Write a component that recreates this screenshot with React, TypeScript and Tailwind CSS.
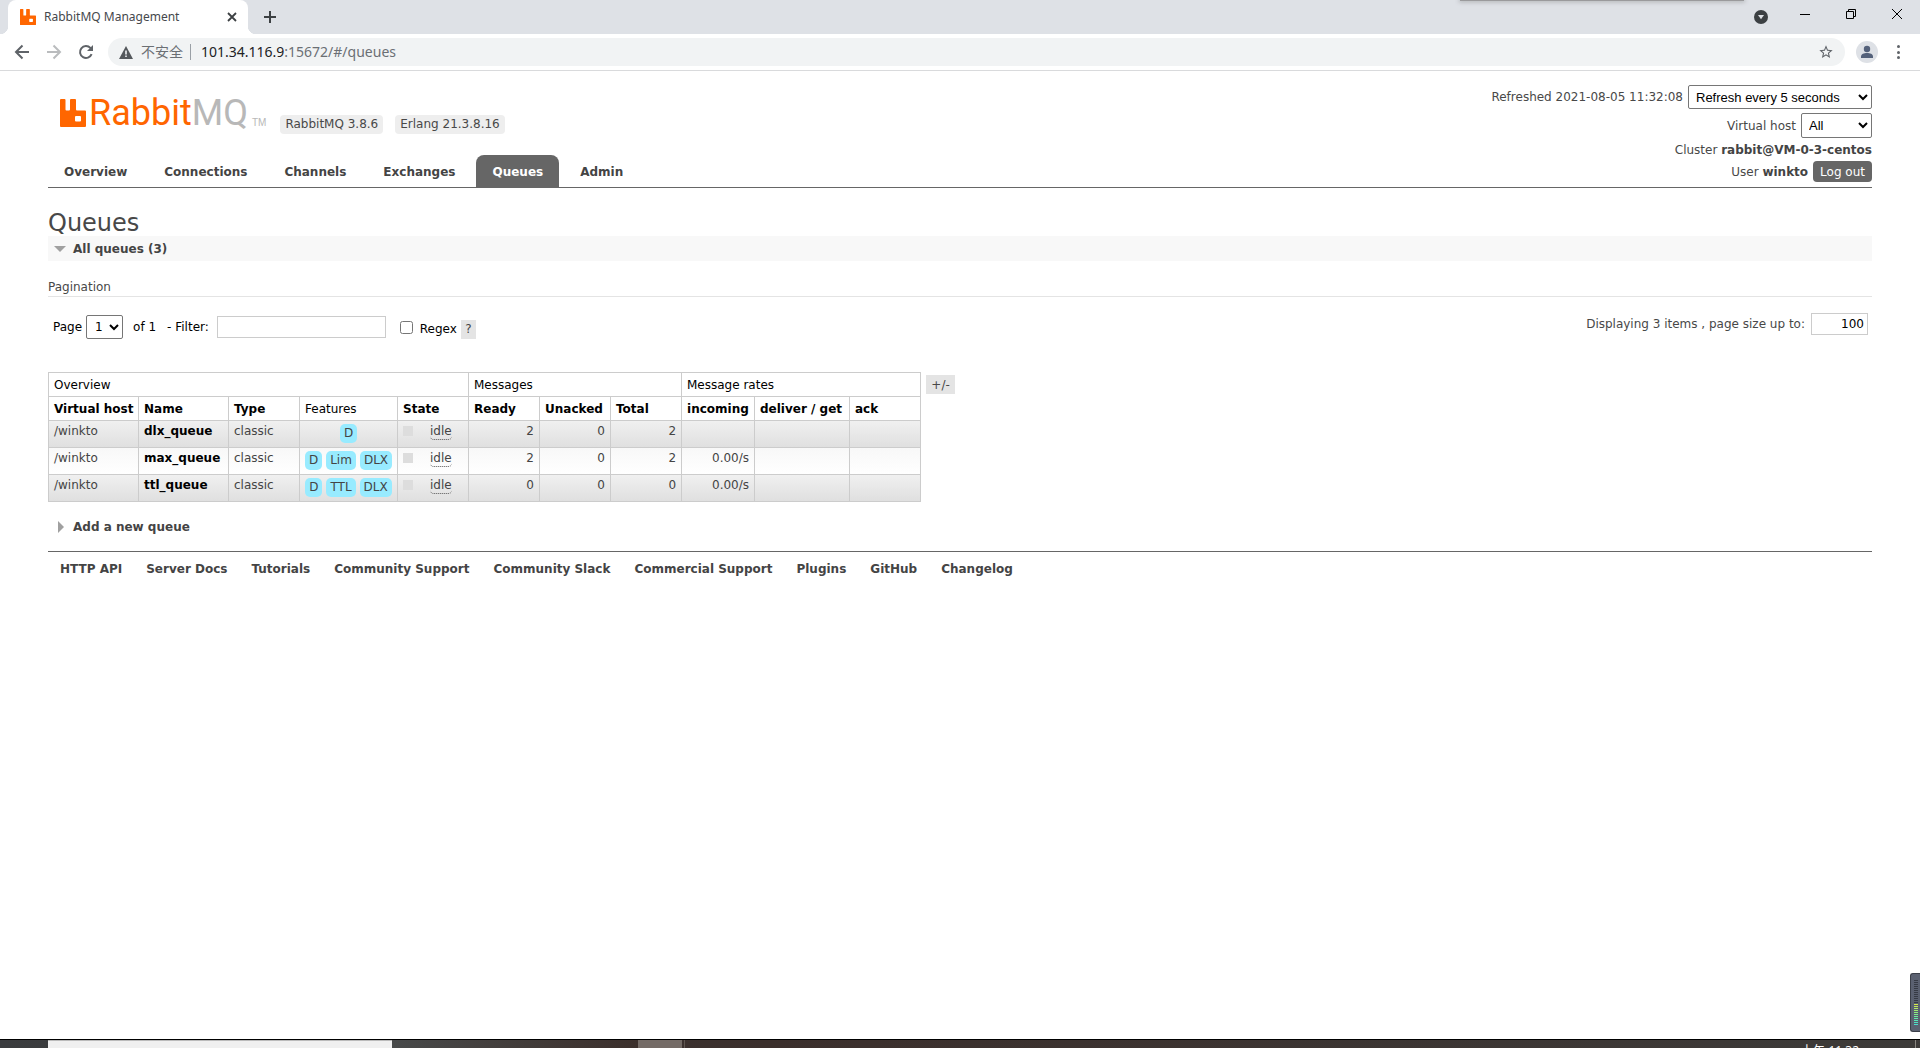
import React from "react";

const tabs = ["Overview", "Connections", "Channels", "Exchanges", "Queues", "Admin"];

const footerLinks = [
  "HTTP API",
  "Server Docs",
  "Tutorials",
  "Community Support",
  "Community Slack",
  "Commercial Support",
  "Plugins",
  "GitHub",
  "Changelog",
];

const columns = [
  { label: "Virtual host", width: "w-[90px]" },
  { label: "Name", width: "w-[90px]" },
  { label: "Type", width: "w-[71px]" },
  { label: "Features", width: "w-[98px]", plain: true },
  { label: "State", width: "w-[71px]" },
  { label: "Ready", width: "w-[71px]" },
  { label: "Unacked", width: "w-[71px]" },
  { label: "Total", width: "w-[71px]" },
  { label: "incoming", width: "w-[73px]" },
  { label: "deliver / get", width: "w-[95px]" },
  { label: "ack", width: "w-[71px]" },
];

const queues = [
  { name: "dlx_queue", features: ["D"], ready: 2, unacked: 0, total: 2, incoming: "" },
  { name: "max_queue", features: ["D", "Lim", "DLX"], ready: 2, unacked: 0, total: 2, incoming: "0.00/s" },
  { name: "ttl_queue", features: ["D", "TTL", "DLX"], ready: 0, unacked: 0, total: 0, incoming: "0.00/s" },
];

const meterColors = [
  "#d6e84a", "#c3ea57", "#b0ec64", "#9eed70", "#8dee7d", "#7cee8b",
  "#6dec9a", "#61eaa9", "#57e6b6", "#50e1c1", "#4adccb",
];

function RabbitMark({ className }: { className: string }) {
  return (
    <svg viewBox="0 0 26 28" className={className} preserveAspectRatio="none" aria-hidden="true">
      <path
        fill="#ff6600"
        fillRule="evenodd"
        d="M1 0h3.500q1 0 1 1v9.500q0 1 1 1h2.500q1 0 1-1V1q0-1 1-1h4q1 0 1 1v9.500q0 1 1 1h8q1 0 1 1V27q0 1-1 1H1q-1 0-1-1V1q0-1 1-1zM16 17q-1 0-1 1v3.600q0 1 1 1h4q1 0 1-1V18q0-1-1-1z"
      />
    </svg>
  );
}

function BrowserChrome() {
  return (
    <header className="font-['Noto_Sans','Noto_Sans_CJK_SC',sans-serif]">
      <div className="relative flex h-[34px] items-stretch bg-[#dee1e6] pl-2">
        <div className="relative flex w-60 items-center rounded-t-lg bg-white pl-3 pr-2 text-xs text-[#45484c]">
          <span className="absolute -left-2 bottom-0 size-2 bg-[radial-gradient(circle_at_0_0,#dee1e6_8px,#fff_8.5px)]" />
          <span className="absolute -right-2 bottom-0 size-2 bg-[radial-gradient(circle_at_100%_0,#dee1e6_8px,#fff_8.5px)]" />
          <RabbitMark className="h-4 w-4" />
          <span className="ml-2 grow whitespace-nowrap">RabbitMQ Management</span>
          <button aria-label="Close tab" className="flex size-4 items-center justify-center">
            <svg viewBox="0 0 16 16" className="size-4" stroke="#3c4043" strokeWidth="1.8">
              <path d="M4 4l8 8M12 4l-8 8" />
            </svg>
          </button>
        </div>
        <button aria-label="New tab" className="ml-3 flex w-5 items-center justify-center">
          <svg viewBox="0 0 14 14" className="size-3.5" stroke="#3c4043" strokeWidth="2">
            <path d="M7 1v12M1 7h12" />
          </svg>
        </button>
        <div className="absolute right-[176px] top-0 h-px w-[284px] bg-[#9a9a9c] shadow-[0_0_4px_1px_#a8aaad]" />
        <div className="ml-auto flex items-start text-black">
          <button aria-label="Search tabs" className="mr-6 mt-2.5">
            <svg viewBox="0 0 14 14" className="size-3.5">
              <circle cx="7" cy="7" r="7" fill="#3c4043" />
              <path d="M4 5h6L7 9.2z" fill="#dee1e6" />
            </svg>
          </button>
          <button aria-label="Minimize" className="flex h-7 w-[46px] items-center justify-start pl-2">
            <span className="h-px w-2.5 bg-black" />
          </button>
          <button aria-label="Restore" className="flex h-7 w-[46px] items-center justify-start pl-2">
            <svg viewBox="0 0 10 10" className="size-2.5" fill="none" stroke="currentColor">
              <path d="M.5 2.5h7v7h-7zM2.5 2.5v-2h7v7h-2" />
            </svg>
          </button>
          <button aria-label="Close" className="flex h-7 w-9 items-center justify-start pl-2">
            <svg viewBox="0 0 10 10" className="size-2.5" stroke="currentColor">
              <path d="M0 0l10 10M10 0L0 10" />
            </svg>
          </button>
        </div>
      </div>
      <div className="flex h-[37px] items-center border-b border-[#d9dadc] bg-white pl-[14px] pr-4">
        <button aria-label="Back" className="mr-4 size-4">
          <svg viewBox="0 0 16 16" className="size-4" fill="none" stroke="#5f6368" strokeWidth="2">
            <path d="M15 8H2M8.500 1.500L2 8l6.500 6.500" />
          </svg>
        </button>
        <button aria-label="Forward" className="mr-4 size-4">
          <svg viewBox="0 0 16 16" className="size-4" fill="none" stroke="#babcbe" strokeWidth="2">
            <path d="M1 8h13M7.500 1.500L14 8l-6.500 6.500" />
          </svg>
        </button>
        <button aria-label="Reload" className="mr-[14px] size-4">
          <svg viewBox="0 0 16 16" className="size-4" fill="none" stroke="#5f6368" strokeWidth="2">
            <path d="M13.600 10.200A6 6 0 1 1 12.400 3.900L14 5.500" />
            <path d="M15 1v6H9z" fill="#5f6368" stroke="none" />
          </svg>
        </button>
        <div className="flex h-7 grow items-center rounded-full bg-[#f1f3f4] pl-[11px] pr-[11px] text-sm text-[#6b6f74]">
          <svg viewBox="0 0 14 13" className="h-[13px] w-[14px]">
            <path d="M7 0l7 13H0z" fill="#54585c" />
            <path d="M6.200 4.500h1.600v4H6.200zM6.200 9.500h1.600v1.600H6.200z" fill="#f1f3f4" />
          </svg>
          <span className="ml-2">不安全</span>
          <span className="ml-[7px] mr-2.5 h-4 w-px bg-[#9aa0a6]" />
          <span className="whitespace-nowrap">
            <span className="text-[#202124]">101.34.116.9</span>:15672/#/queues
          </span>
          <button aria-label="Bookmark" className="ml-auto size-4">
            <svg viewBox="0 0 24 24" className="size-4" fill="#5f6368">
              <path d="M22 9.240l-7.190-.620L12 2 9.190 8.630 2 9.240l5.460 4.730L5.820 21 12 17.270 18.180 21l-1.630-7.030zM12 15.400l-3.760 2.270 1-4.280-3.320-2.880 4.380-.380L12 6.100l1.710 4.040 4.380.380-3.320 2.880 1 4.280z" />
            </svg>
          </button>
        </div>
        <button aria-label="Profile" className="ml-[11px] size-[22px]">
          <svg viewBox="0 0 22 22" className="size-[22px]">
            <circle cx="11" cy="11" r="11" fill="#dee1e6" />
            <circle cx="11" cy="8" r="3.200" fill="#54617a" />
            <path d="M5 17v-1.500c0-4.600 12-4.600 12 0V17z" fill="#54617a" />
          </svg>
        </button>
        <button aria-label="Menu" className="ml-[14px] flex h-4 w-3 flex-col items-center justify-between py-px">
          <span className="size-[3px] rounded-full bg-[#5f6368]" />
          <span className="size-[3px] rounded-full bg-[#5f6368]" />
          <span className="size-[3px] rounded-full bg-[#5f6368]" />
        </button>
      </div>
    </header>
  );
}

function PageHeader() {
  return (
    <header className="flex h-[117px] items-stretch justify-between border-b border-[#666]">
      <div className="flex flex-col justify-between pt-7">
        <div className="flex items-end gap-3 pl-3">
          <a href="#/" className="mr-0.5 flex items-end">
            <RabbitMark className="h-7 w-[26px]" />
            <span className="ml-[3px] font-['Roboto',sans-serif] text-[36px] leading-7 text-[#f60]">
              Rabbit<span className="text-[#b8b8b8]">MQ</span>
            </span>
            <span className="ml-1 font-['Liberation_Sans',sans-serif] text-[10px] leading-2 text-[#b8b8b8]">TM</span>
          </a>
          <span className="-mb-[7px] rounded-[4px] bg-[#eee] px-[5px] leading-[19px]">RabbitMQ 3.8.6</span>
          <span className="-mb-[7px] rounded-[4px] bg-[#eee] px-[5px] leading-[19px]">Erlang 21.3.8.16</span>
        </div>
        <nav className="flex gap-[5px] font-bold">
          {tabs.map((tab) => (
            <a
              key={tab}
              href={"#/" + tab.toLowerCase()}
              className={
                tab === "Queues"
                  ? "rounded-t-lg bg-[#666] px-4 pt-0.5 leading-[30px] text-white"
                  : "px-4 pt-0.5 leading-[30px] text-[#444]"
              }
            >
              {tab}
            </a>
          ))}
        </nav>
      </div>
      <div className="flex flex-col items-end pt-[14px]">
        <div className="mb-1 flex items-center gap-[5px]">
          <label htmlFor="refresh">Refreshed 2021-08-05 11:32:08</label>
          <select id="refresh" className="h-6 w-[184px] rounded-[2px] border border-[#767676] bg-white pl-[3px] font-['Liberation_Sans',sans-serif] text-[13px] text-black">
            <option>Refresh every 5 seconds</option>
          </select>
        </div>
        <div className="mb-0.5 flex items-center gap-[5px]">
          <label htmlFor="vhost">Virtual host</label>
          <select id="vhost" className="h-[25px] w-[71px] rounded-[2px] border border-[#767676] bg-white pl-[3px] font-['Liberation_Sans',sans-serif] text-[13px] text-black">
            <option>All</option>
          </select>
        </div>
        <div className="mb-px leading-5">
          Cluster <b className="text-[#444]">rabbit@VM-0-3-centos</b>
        </div>
        <div className="flex items-center gap-[5px]">
          <span>
            User <b className="text-[#444]">winkto</b>
          </span>
          <button className="h-[21px] rounded-[4px] bg-[#666] px-[7px] text-white">Log out</button>
        </div>
      </div>
    </header>
  );
}

function Pagination() {
  return (
    <section>
      <h3 className="mt-[17px] border-b border-[#e4e4e4] leading-[18px]">Pagination</h3>
      <div className="mt-4 flex items-start justify-between pl-[5px] pr-1">
        <div className="flex items-center pt-0.5 text-black">
          <label htmlFor="page">Page</label>
          <select id="page" className="ml-1 h-6 w-[37px] rounded-[2px] border border-[#767676] bg-white pl-1 text-[12px]">
            <option>1</option>
          </select>
          <span className="ml-2.5">of 1</span>
          <label htmlFor="filter" className="ml-[11px]">
            - Filter:
          </label>
          <input id="filter" type="text" className="ml-2 h-[22px] w-[169px] border border-[#ccc]" />
          <input id="regex" type="checkbox" className="ml-[14px] size-[13px]" />
          <div className="ml-[7px] flex items-center gap-1 pt-1">
            <label htmlFor="regex">Regex</label>
            <button className="h-[19px] w-[15px] bg-[#e4e4e4] text-[#444]">?</button>
          </div>
        </div>
        <div className="flex items-center gap-1.5">
          <label htmlFor="size">Displaying 3 items , page size up to:</label>
          <input id="size" type="text" defaultValue="100" className="h-[22px] w-[57px] border border-[#ccc] pr-[3px] text-right text-black" />
        </div>
      </div>
    </section>
  );
}

function QueueTable() {
  return (
    <div className="mt-[33px] flex items-start gap-[5px]">
      <table className="w-[872px] table-fixed border-collapse text-left text-black">
        <colgroup>
          {columns.map((c) => (
            <col key={c.label} className={c.width} />
          ))}
        </colgroup>
        <thead>
          <tr className="h-6">
            <th colSpan={5} className="border border-[#ccc] px-[5px] font-normal">Overview</th>
            <th colSpan={3} className="border border-[#ccc] px-[5px] font-normal">Messages</th>
            <th colSpan={3} className="border border-[#ccc] px-[5px] font-normal">Message rates</th>
          </tr>
          <tr className="h-6">
            {columns.map((c) => (
              <th
                key={c.label}
                className={
                  c.plain
                    ? "whitespace-nowrap border border-[#ccc] px-[5px] font-normal"
                    : "whitespace-nowrap border border-[#ccc] px-[5px] font-bold"
                }
              >
                {c.label}
              </th>
            ))}
          </tr>
        </thead>
        <tbody className="text-[#444]">
          {queues.map((q, i) => (
            <tr
              key={q.name}
              className={
                i % 2 === 0
                  ? "h-[27px] bg-linear-to-b from-[#f0f0f0] to-[#dfdfdf] align-top"
                  : "h-[27px] bg-linear-to-b from-[#f8f8f8] to-white align-top"
              }
            >
              <td className="border border-[#ccc] px-[5px] pt-0.5">/winkto</td>
              <td className="border border-[#ccc] px-[5px] pt-0.5">
                <a href="#/queues" className="font-bold text-black">{q.name}</a>
              </td>
              <td className="border border-[#ccc] px-[5px] pt-0.5">classic</td>
              <td className="border border-[#ccc] pt-[3px]">
                <div className="flex justify-center gap-1">
                  {q.features.map((f) => (
                    <span key={f} className="rounded-[5px] bg-[#98ebff] px-1 leading-[19px]">{f}</span>
                  ))}
                </div>
              </td>
              <td className="border border-[#ccc] px-[5px] pt-0.5">
                <div className="flex items-start">
                  <span className="mt-[3px] size-2.5 bg-[#ddd]" />
                  <span className="ml-[17px] rounded-[4px] border-b border-dotted border-[#555]">idle</span>
                </div>
              </td>
              <td className="border border-[#ccc] px-[5px] pt-0.5 text-right">{q.ready}</td>
              <td className="border border-[#ccc] px-[5px] pt-0.5 text-right">{q.unacked}</td>
              <td className="border border-[#ccc] px-[5px] pt-0.5 text-right">{q.total}</td>
              <td className="border border-[#ccc] px-[5px] pt-0.5 text-right">{q.incoming}</td>
              <td className="border border-[#ccc]" />
              <td className="border border-[#ccc]" />
            </tr>
          ))}
        </tbody>
      </table>
      <button className="mt-[3px] h-[19px] w-[29px] bg-[#e4e4e4]">+/-</button>
    </div>
  );
}

function Taskbar() {
  return (
    <div className="relative flex h-[9px] overflow-hidden border-t border-black bg-linear-to-r from-[#3a3c3e] via-[#3b2f2c] via-40% to-[#3c3a38]">
      <div className="ml-12 w-[344px] border-t border-[#bbb] bg-[#f0f0f0]" />
      <div className="w-[246px] bg-linear-to-r from-[#484a4a] to-[#3b2f2b]" />
      <div className="w-[44px] bg-[#746b66]" />
      <div className="ml-0.5 w-px bg-[#5e5550]" />
      <span className="ml-auto mr-14 whitespace-nowrap pt-[5px] font-['Open_Sans','Noto_Sans_CJK_SC',sans-serif] text-xs leading-3 text-white">
        上午 11:32
      </span>
      <div className="mr-1 w-px bg-[#88857f]" />
    </div>
  );
}

export default function App() {
  return (
    <div className="flex min-h-screen flex-col bg-white font-['DejaVu_Sans',sans-serif] text-xs text-[#484848]">
      <BrowserChrome />
      <main className="grow px-12">
        <PageHeader />
        <h1 className="pt-[22px] text-2xl leading-[26px]">Queues</h1>
        <h2 className="bg-[#f8f8f8] font-bold text-[#444]">
          <button className="flex h-[25px] w-full items-center pl-1.5">
            <svg viewBox="0 0 12 6" className="mr-[7px] h-1.5 w-3">
              <path d="M0 0h12L6 6z" fill="#a0a0a0" />
            </svg>
            All queues (3)
          </button>
        </h2>
        <Pagination />
        <QueueTable />
        <h2 className="mt-3 font-bold text-[#444]">
          <button className="flex h-[25px] items-center pl-2.5">
            <svg viewBox="0 0 6 12" className="mr-[9px] h-3 w-1.5">
              <path d="M0 0v12l6-6z" fill="#a0a0a0" />
            </svg>
            Add a new queue
          </button>
        </h2>
        <footer className="mt-3 flex gap-6 border-t border-[#666] px-3 pt-[9px] font-bold text-[#444]">
          {footerLinks.map((l) => (
            <a key={l} href="#" className="whitespace-nowrap">{l}</a>
          ))}
        </footer>
      </main>
      <div className="fixed right-0 bottom-4 flex h-[59px] w-2.5 flex-col gap-px rounded-l-[3px] border border-r-0 border-[#3a3e48] bg-[#5a6070] pl-[3px] pt-[6px]">
        {Array.from({ length: 12 }, (_, i) => (
          <span key={i} className="h-px w-1 shrink-0 bg-[#363a44]" />
        ))}
        {meterColors.map((c) => (
          <span key={c} className="h-px w-1 shrink-0" style={{ backgroundColor: c }} />
        ))}
      </div>
      <Taskbar />
    </div>
  );
}
